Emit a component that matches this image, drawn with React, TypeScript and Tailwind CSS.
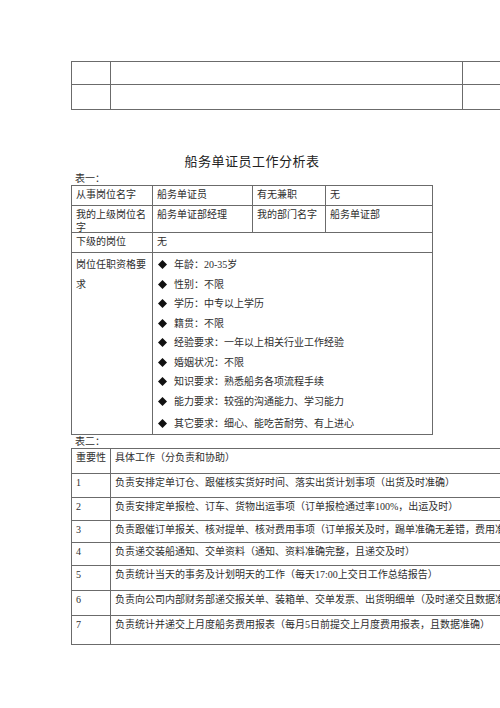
import React from 'react';

const font = { fontFamily: '"Liberation Serif", "Noto Sans CJK SC", serif' };

const qualifications = [
  '年龄：20-35岁',
  '性别：不限',
  '学历：中专以上学历',
  '籍贯：不限',
  '经验要求：一年以上相关行业工作经验',
  '婚姻状况：不限',
  '知识要求：熟悉船务各项流程手续',
  '能力要求：较强的沟通能力、学习能力',
  '其它要求：细心、能吃苦耐劳、有上进心',
];

const duties = [
  { no: '1', text: '负责安排定单订仓、跟催核实货好时间、落实出货计划事项（出货及时准确）', h: 'h-[24px]' },
  { no: '2', text: '负责安排定单报检、订车、货物出运事项（订单报检通过率100%，出运及时）', h: 'h-[23px]' },
  { no: '3', text: '负责跟催订单报关、核对提单、核对费用事项（订单报关及时，踢单准确无差错，费用准确）', h: 'h-[22px]' },
  { no: '4', text: '负责递交装船通知、交单资料（通知、资料准确完整，且递交及时）', h: 'h-[23px]' },
  { no: '5', text: '负责统计当天的事务及计划明天的工作（每天17:00上交日工作总结报告）', h: 'h-[25px]' },
  { no: '6', text: '负责向公司内部财务部递交报关单、装箱单、交单发票、出货明细单（及时递交且数据准确）', h: 'h-[25px]' },
  { no: '7', text: '负责统计并递交上月度船务费用报表（每月5日前提交上月度费用报表，且数据准确）', h: 'h-[29px]' },
];

const Cell: React.FC<{ className?: string; children?: React.ReactNode }> = ({ className = '', children }) => (
  <div className={`border-r border-b border-[#6b6b6b] px-[4px] pt-[2px] leading-[13px] ${className}`}>{children}</div>
);

const Diamond = () => (
  <svg width="9" height="9" viewBox="0 0 9 9" className="shrink-0">
    <path d="M4.5 0 L9 4.5 L4.5 9 L0 4.5 Z" fill="#111" />
  </svg>
);

const App: React.FC = () => {
  return (
    <div className="w-[500px] h-[708px] overflow-hidden bg-white text-[10px] text-[#2e2e2e]" style={font}>
      <div className="pt-[61px] pl-[71px]">
        {/* previous page table, cut off */}
        <div className="w-[480px] border-t border-l border-[#6b6b6b] grid grid-cols-[39px_352px_1fr]">
          <Cell className="h-[23px]" />
          <Cell className="h-[23px]" />
          <Cell className="h-[23px]" />
          <Cell className="h-[25px]" />
          <Cell className="h-[25px]" />
          <Cell className="h-[25px]" />
        </div>

        <h1 className="w-[362px] mt-[44px] text-center text-[13px] leading-[16px] tracking-[0.5px] text-[#222]">
          船务单证员工作分析表
        </h1>

        <div className="mt-[3px] pl-[4px] leading-[12px]">表一：</div>
        <div className="w-[362px] border-t border-l border-[#6b6b6b] grid grid-cols-[81px_100px_73px_1fr]">
          <Cell className="h-[20px]">从事岗位名字</Cell>
          <Cell className="h-[20px]">船务单证员</Cell>
          <Cell className="h-[20px]">有无兼职</Cell>
          <Cell className="h-[20px]">无</Cell>
          <Cell className="h-[27px] pt-[1px]">我的上级岗位名字</Cell>
          <Cell className="h-[27px] pt-[1px]">船务单证部经理</Cell>
          <Cell className="h-[27px] pt-[1px]">我的部门名字</Cell>
          <Cell className="h-[27px] pt-[1px]">船务单证部</Cell>
          <Cell className="h-[20px]">下级的岗位</Cell>
          <Cell className="h-[20px] col-span-3">无</Cell>
          <Cell className="h-[182px] pt-0 leading-[19.5px]">岗位任职资格要求</Cell>
          <Cell className="col-span-3 h-[182px] pt-0 pl-[5px]">
            {qualifications.map((q, i) => (
              <div
                key={q}
                className={`flex items-center gap-[7px] h-[19.5px] ${i === qualifications.length - 1 ? 'mt-[2.5px]' : ''}`}
              >
                <Diamond />
                <span>{q}</span>
              </div>
            ))}
          </Cell>
        </div>

        <div className="pl-[4px] leading-[13px]">表二：</div>
        <div className="w-[560px] border-t border-l border-[#6b6b6b] grid grid-cols-[39px_1fr] whitespace-nowrap">
          <Cell className="h-[25px] pt-[1px]">重要性</Cell>
          <Cell className="h-[25px] pt-[1px]">具体工作（分负责和协助）</Cell>
          {duties.map((d) => (
            <React.Fragment key={d.no}>
              <Cell className={`${d.h} pt-[1px]`}>{d.no}</Cell>
              <Cell className={`${d.h} pt-[1px]`}>{d.text}</Cell>
            </React.Fragment>
          ))}
        </div>
      </div>
    </div>
  );
};

export default App;
